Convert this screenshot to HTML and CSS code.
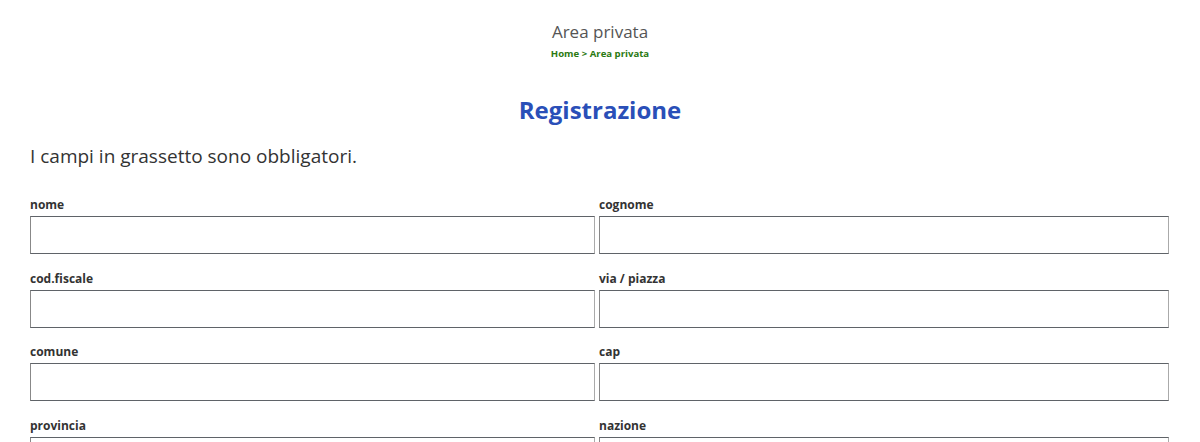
FILE: index.html
```html
<!DOCTYPE html>
<html lang="it">
<head>
    <meta charset="UTF-8">
    <meta name="viewport" content="width=device-width, initial-scale=1.0">
    <title>Area privata - Registrazione</title>
    <link rel="stylesheet" href="styles.css">
</head>
<body>
    <div class="page-head">
        <h1>Area privata</h1>
        <div class="crumbs"><a href="#">Home</a> &gt; <a href="#">Area privata</a></div>
    </div>

    <div class="container">
        <h2>Registrazione</h2>
        <p class="note">I campi in grassetto sono obbligatori.</p>

        <form class="form-grid">
            <div class="field left">
                <label for="nome">nome</label>
                <input type="text" id="nome">
            </div>
            <div class="field">
                <label for="cognome">cognome</label>
                <input type="text" id="cognome">
            </div>

            <div class="field left">
                <label for="codfiscale">cod.fiscale</label>
                <input type="text" id="codfiscale">
            </div>
            <div class="field">
                <label for="via">via / piazza</label>
                <input type="text" id="via">
            </div>

            <div class="field left">
                <label for="comune">comune</label>
                <input type="text" id="comune">
            </div>
            <div class="field">
                <label for="cap">cap</label>
                <input type="text" id="cap">
            </div>

            <div class="field left">
                <label for="provincia">provincia</label>
                <input type="text" id="provincia">
            </div>
            <div class="field">
                <label for="nazione">nazione</label>
                <input type="text" id="nazione">
            </div>
        </form>
    </div>
</body>
</html>
```

FILE: styles.css
```css
body {
    font-family: "Open Sans", Arial, sans-serif;
    background-color: #fff;
    color: #333;
    margin: 0;
    padding: 0;
}

.page-head {
    text-align: center;
    padding-top: 21px;
}

.page-head h1 {
    font-size: 17px;
    font-weight: normal;
    color: #555;
    margin: 0;
    line-height: 22px;
}

.crumbs {
    font-size: 9.6px;
    font-weight: bold;
    color: #2b7a12;
    margin-top: 4px;
    line-height: 14px;
}

.crumbs a {
    color: #2b7a12;
    text-decoration: none;
}

.container {
    padding: 0 30px;
}

h2 {
    text-align: center;
    color: #2a4fb8;
    font-size: 24px;
    font-weight: bold;
    margin: 32px 0 0;
    line-height: 34px;
}

.note {
    font-size: 19px;
    color: #333;
    margin: 16px 0 0;
    line-height: 26px;
}

.form-grid {
    display: grid;
    grid-template-columns: 1fr 1fr;
    row-gap: 16.5px;
    margin-top: 28px;
}

.field label {
    display: block;
    font-size: 12px;
    font-weight: bold;
    color: #333;
    line-height: 16px;
    margin-bottom: 3px;
}

.field.left input {
    width: calc(100% - 5px);
}

.field:not(.left) label {
    margin-left: -1px;
}

.field:not(.left) input {
    margin-left: -1px;
}

input {
    box-sizing: border-box;
    width: 100%;
    height: 38px;
    padding: 6px;
    border: 1px solid #5f6368;
    border-right-color: #aaa;
    border-left-color: #888;
    border-radius: 0;
    font-size: 14px;
    font-family: inherit;
    background: #fff;
    display: block;
}
```
